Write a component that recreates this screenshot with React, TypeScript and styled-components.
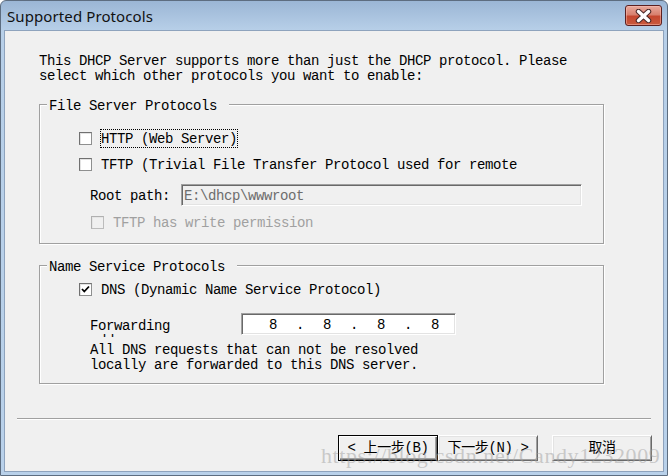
import React from "react";
import styled, { createGlobalStyle } from "styled-components";

const Global = createGlobalStyle`
  html, body { margin: 0; padding: 0; background: #ffffff; }
  body { width: 672px; height: 476px; overflow: hidden; }
  * { box-sizing: border-box; }
`;

const Window = styled.div`
  position: relative;
  width: 668px;
  height: 476px;
  border: 1px solid #5d6d80;
  border-radius: 6px 6px 0 0;
  background: linear-gradient(to bottom, #9bb6d5 0px, #b7cfe8 29px, #b9d1ea 100%);
  display: flex;
  flex-direction: column;
  padding: 0 3px 3px 3px;
  overflow: hidden;
`;

const TitleBar = styled.div`
  height: 29px;
  display: flex;
  align-items: center;
  justify-content: space-between;
  padding: 0 2px 0 3px;
`;

const Title = styled.span`
  font-family: "Noto Sans", "Open Sans", sans-serif;
  font-size: 15px;
  color: #111;
  letter-spacing: 0.1px;
`;

const CloseButton = styled.div`
  width: 37px;
  height: 21px;
  border: 1px solid #5c2020;
  border-radius: 3px;
  background: linear-gradient(to bottom, #e9a99c 0%, #d8816f 45%, #c5472f 55%, #c95a3e 100%);
  box-shadow: inset 0 0 0 1px rgba(255, 200, 190, 0.45);
  display: flex;
  align-items: center;
  justify-content: center;
`;

const Body = styled.div`
  flex: 1;
  border: 1px solid #8ea3bd;
  background: #f0f0f0;
  display: flex;
  flex-direction: column;
  font-family: "Liberation Mono", "Noto Sans CJK SC", monospace;
  font-size: 14px;
  letter-spacing: -0.4px;
  line-height: 15px;
  color: #000;
`;

const Intro = styled.p`
  margin: 23px 0 0 34px;
  white-space: pre;
`;

const GroupBox = styled.div<{ $top: number; $pt: number; $pb: number }>`
  position: relative;
  margin: ${(p) => p.$top}px 0 0 34px;
  width: 565px;
  border: 1px solid #a0a0a0;
  box-shadow: inset 1px 1px 0 #ffffff, 1px 1px 0 #ffffff;
  padding: ${(p) => p.$pt}px 0 ${(p) => p.$pb}px 39px;
  display: flex;
  flex-direction: column;
`;

const Legend = styled.span`
  position: absolute;
  top: -6px;
  left: 7px;
  padding: 0 12px 0 2px;
  background: #f0f0f0;
  white-space: pre;
`;

const Row = styled.div<{ $mt?: number; $indent?: number; $h?: number }>`
  display: flex;
  align-items: center;
  height: ${(p) => p.$h ?? 19}px;
  margin-top: ${(p) => p.$mt ?? 0}px;
  padding-left: ${(p) => p.$indent ?? 0}px;
  white-space: pre;
`;

const Box = styled.span<{ $disabled?: boolean }>`
  width: 13px;
  height: 13px;
  flex: none;
  border: 1px solid ${(p) => (p.$disabled ? "#bcbcbc" : "#8e8f8f")};
  border-top-color: ${(p) => (p.$disabled ? "#b0b0b0" : "#707070")};
  border-left-color: ${(p) => (p.$disabled ? "#b0b0b0" : "#707070")};
  background: ${(p) => (p.$disabled ? "#f0f0f0" : "#ffffff")};
  box-shadow: inset 1px 1px 0 ${(p) => (p.$disabled ? "#e6e6e6" : "#e3e3e3")};
  margin-right: 8px;
  display: flex;
  align-items: center;
  justify-content: center;
`;

const CheckLabel = styled.span<{ $focus?: boolean; $disabled?: boolean }>`
  border: 1px ${(p) => (p.$focus ? "dotted #000" : "solid transparent")};
  height: 19px;
  padding-top: 2px;
  display: flex;
  align-items: center;
  color: ${(p) => (p.$disabled ? "#a0a0a0" : "#000")};
`;

const FieldLabel = styled.span<{ $w: number }>`
  width: ${(p) => p.$w}px;
  padding-top: 2px;
  flex: none;
`;

const Sunken = styled.div<{ $w: number; $bg: string }>`
  width: ${(p) => p.$w}px;
  height: 22px;
  flex: none;
  background: ${(p) => p.$bg};
  border: 1px solid;
  border-color: #a0a0a0 #ffffff #ffffff #a0a0a0;
  box-shadow: inset 1px 1px 0 #696969, inset -1px -1px 0 #e3e3e3;
  display: flex;
  align-items: center;
  padding-top: 2px;
`;

const PathText = styled.span`
  padding-left: 2px;
  color: #6d6d6d;
`;

const ForwardLabel = styled.span`
  width: 120px;
  height: 18px;
  margin-right: 31px;
  align-self: flex-start;
  margin-top: 6px;
  overflow: hidden;
  white-space: normal;
  flex: none;
`;

const IpFields = styled.div`
  display: flex;
  padding-left: 12px;
`;

const IpField = styled.span`
  width: 38px;
  text-align: center;
`;

const IpDot = styled.span`
  width: 16px;
  text-align: center;
`;

const Desc = styled.p`
  margin: 8px 0 0 11px;
  white-space: pre;
`;

const Separator = styled.div`
  margin: 34px 12px 0 12px;
  border-top: 1px solid #a0a0a0;
  border-bottom: 1px solid #ffffff;
`;

const ButtonRow = styled.div`
  display: flex;
  justify-content: flex-end;
  padding-right: 11px;
  margin-top: 15px;
`;

const Button = styled.div<{ $default?: boolean; $gap?: number }>`
  width: 100px;
  height: 26px;
  margin-left: ${(p) => p.$gap ?? 0}px;
  display: flex;
  align-items: center;
  justify-content: center;
  padding-top: 1px;
  background: #f0f0f0;
  white-space: pre;
  border: 1px solid;
  border-color: ${(p) =>
    p.$default ? "#000 #000 #000 #000" : "#ffffff #696969 #696969 #ffffff"};
  box-shadow: ${(p) =>
    p.$default
      ? "inset 1px 1px 0 #ffffff, inset -1px -1px 0 #696969, inset -2px -2px 0 #a0a0a0"
      : "inset 1px 1px 0 #e3e3e3, inset -1px -1px 0 #a0a0a0"};
`;

const Watermark = styled.span`
  position: absolute;
  left: 320px;
  top: 442px;
  font-family: "Liberation Serif", serif;
  font-size: 22px;
  letter-spacing: 0.6px;
  color: rgba(160, 160, 160, 0.5);
  white-space: nowrap;
  pointer-events: none;
`;

const CheckMark = () => (
  <svg width="11" height="11" viewBox="0 0 11 11">
    <path d="M2 5 L4.3 7.5 L9 2.5" fill="none" stroke="#000" strokeWidth="1.8" />
  </svg>
);

const CloseX = () => (
  <svg width="17" height="14" viewBox="0 0 17 14">
    <path d="M3.5 2.5 L13.5 11.5 M13.5 2.5 L3.5 11.5" stroke="#4a2a2a" strokeWidth="5.5" strokeLinecap="round" />
    <path d="M3.5 2.5 L13.5 11.5 M13.5 2.5 L3.5 11.5" stroke="#ffffff" strokeWidth="3.4" strokeLinecap="round" />
  </svg>
);

export default function App() {
  return (
    <>
      <Global />
      <Window>
        <TitleBar>
          <Title>Supported Protocols</Title>
          <CloseButton>
            <CloseX />
          </CloseButton>
        </TitleBar>
        <Body>
          <Intro>
            {"This DHCP Server supports more than just the DHCP protocol. Please\nselect which other protocols you want to enable:"}
          </Intro>

          <GroupBox $top={20} $pt={24} $pb={11}>
            <Legend>File Server Protocols</Legend>
            <Row>
              <Box />
              <CheckLabel $focus>HTTP (Web Server)</CheckLabel>
            </Row>
            <Row $mt={7}>
              <Box />
              <CheckLabel>TFTP (Trivial File Transfer Protocol used for remote</CheckLabel>
            </Row>
            <Row $mt={10} $indent={11} $h={22}>
              <FieldLabel $w={91}>Root path:</FieldLabel>
              <Sunken $w={401} $bg="#f0f0f0">
                <PathText>E:\dhcp\wwwroot</PathText>
              </Sunken>
            </Row>
            <Row $mt={7} $indent={12}>
              <Box $disabled />
              <CheckLabel $disabled>TFTP has write permission</CheckLabel>
            </Row>
          </GroupBox>

          <GroupBox $top={21} $pt={14} $pb={10}>
            <Legend>Name Service Protocols</Legend>
            <Row>
              <Box>
                <CheckMark />
              </Box>
              <CheckLabel>DNS (Dynamic Name Service Protocol)</CheckLabel>
            </Row>
            <Row $mt={14} $indent={11} $h={22}>
              <ForwardLabel>Forwarding address</ForwardLabel>
              <Sunken $w={215} $bg="#ffffff">
                <IpFields>
                  <IpField>8</IpField>
                  <IpDot>.</IpDot>
                  <IpField>8</IpField>
                  <IpDot>.</IpDot>
                  <IpField>8</IpField>
                  <IpDot>.</IpDot>
                  <IpField>8</IpField>
                </IpFields>
              </Sunken>
            </Row>
            <Desc>
              {"All DNS requests that can not be resolved\nlocally are forwarded to this DNS server."}
            </Desc>
          </GroupBox>

          <Separator />

          <ButtonRow>
            <Button $default>{"< 上一步(B)"}</Button>
            <Button>{"下一步(N) >"}</Button>
            <Button $gap={14}>取消</Button>
          </ButtonRow>
        </Body>
        <Watermark>https://blog.csdn.net/Candy1232009</Watermark>
      </Window>
    </>
  );
}
